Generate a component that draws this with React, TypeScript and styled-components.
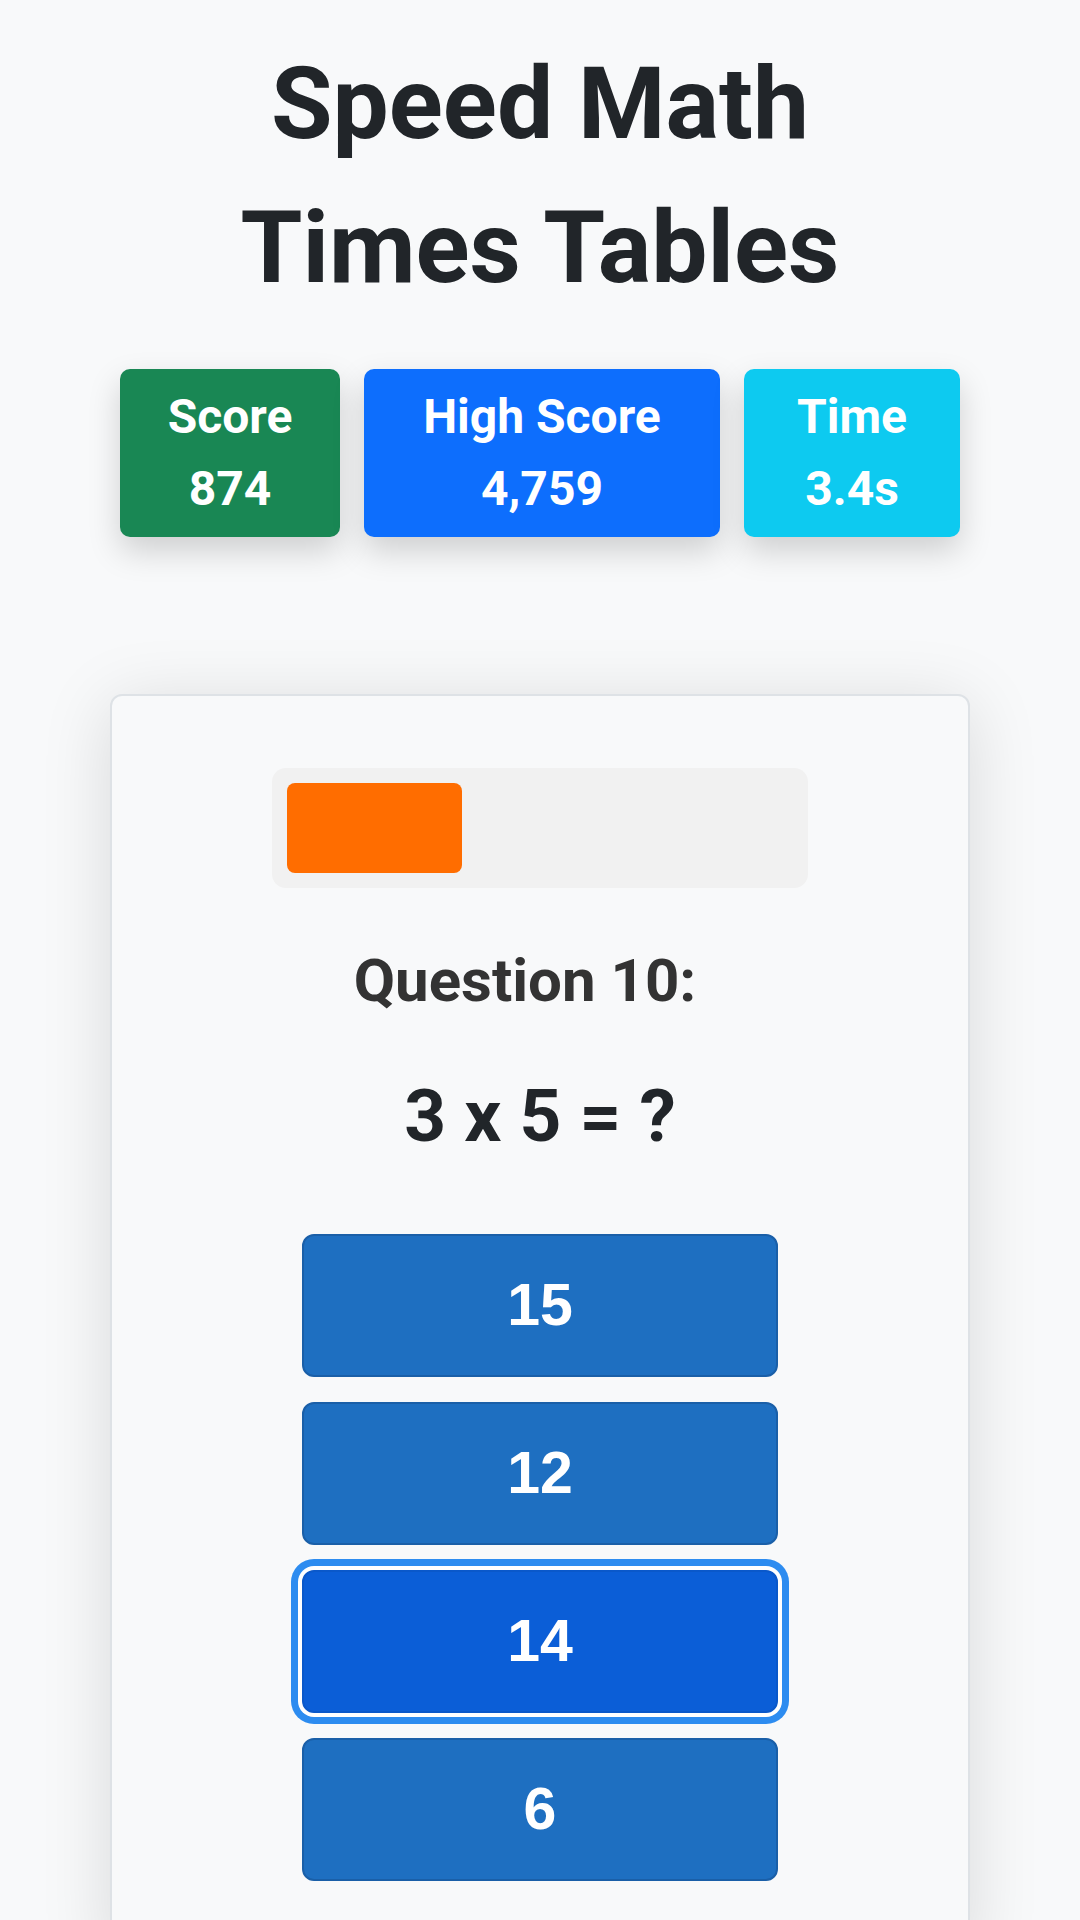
import React from 'react'
import styled, { createGlobalStyle } from 'styled-components'

const stats = [
  { label: 'Score', value: '874', bg: '#198754', w: 220 },
  { label: 'High Score', value: '4,759', bg: '#0d6efd', w: 356 },
  { label: 'Time', value: '3.4s', bg: '#0dcaf0', w: 216 },
]

const answers = [15, 12, 14, 6]
const focused = 14
const progress = 34.6

const App = () => {
  return (
    <Page>
      <GlobalStyle />
      <Title>
        Speed Math
        <br />
        Times Tables
      </Title>

      <StatRow>
        {stats.map((s) => (
          <StatBox key={s.label} bg={s.bg} w={s.w}>
            <StatLine>{s.label}</StatLine>
            <StatLine>{s.value}</StatLine>
          </StatBox>
        ))}
      </StatRow>

      <Card>
        <Track>
          <Fill style={{ width: `${progress}%` }} />
        </Track>

        <QuestionLabel>Question 10:</QuestionLabel>
        <Equation>3 x 5 = ?</Equation>

        <Answers>
          {answers.map((a) => (
            <AnswerButton key={a} active={a === focused}>
              {a}
            </AnswerButton>
          ))}
        </Answers>
      </Card>
    </Page>
  )
}

export default App

const GlobalStyle = createGlobalStyle`
html, body {
  margin: 0;
  padding: 0;
  background: #f8f9fa;
}
body {
  font-family: Roboto, "Liberation Sans", sans-serif;
  color: #212529;
}
`
const Page = styled.div`
display: flex;
flex-direction: column;
align-items: center;
padding-top: 32px;
width: 1080px;
overflow: hidden;
`
const Title = styled.h1`
margin: 0;
font-size: 100px;
line-height: 144px;
font-weight: 700;
text-align: center;
color: #212529;
`
const StatRow = styled.div`
display: flex;
justify-content: center;
gap: 24px;
margin-top: 49px;
`
const StatBox = styled.div<{ bg: string; w: number }>`
width: ${({ w }) => w}px;
box-sizing: border-box;
padding: 12px 0;
border-radius: 10px;
background-color: ${({ bg }) => bg};
color: white;
text-align: center;
box-shadow: 0 14px 32px rgba(0, 0, 0, 0.17);
`
const StatLine = styled.div`
font-size: 48px;
line-height: 72px;
font-weight: 700;
`
const Card = styled.div`
margin-top: 157px;
width: 860px;
box-sizing: border-box;
padding: 72px 0;
border: 2px solid #dee2e6;
border-radius: 12px;
background: #f8f9fa;
box-shadow: 0 10px 70px rgba(0, 0, 0, 0.13);
display: flex;
flex-direction: column;
align-items: center;
`
const Track = styled.div`
width: 536px;
height: 120px;
box-sizing: border-box;
padding: 15px;
border-radius: 14px;
background: #f1f1f1;
`
const Fill = styled.div`
height: 90px;
border-radius: 8px;
background: #ff6d00;
`
const QuestionLabel = styled.div`
margin-top: 57px;
padding-right: 30px;
font-size: 60px;
line-height: 1.2;
font-weight: 700;
color: #333333;
`
const Equation = styled.div`
margin-top: 56px;
font-size: 73px;
line-height: 1.2;
font-weight: 700;
color: #212529;
`
const Answers = styled.div`
margin-top: 73px;
display: flex;
flex-direction: column;
gap: 25px;
`
const AnswerButton = styled.button<{ active?: boolean }>`
width: 476px;
height: 143px;
border: 2px solid ${({ active }) => (active ? '#0a58ca' : '#1a5fa8')};
border-radius: 12px;
background-color: ${({ active }) => (active ? '#0b5ed7' : '#1e6fc1')};
color: white;
font-family: "Liberation Sans", Arial, sans-serif;
font-size: 59px;
font-weight: 700;
cursor: pointer;
outline: none;
box-shadow: ${({ active }) => (active ? '0 0 0 4px #ffffff, 0 0 0 11px #2d8cf0' : 'none')};
`
